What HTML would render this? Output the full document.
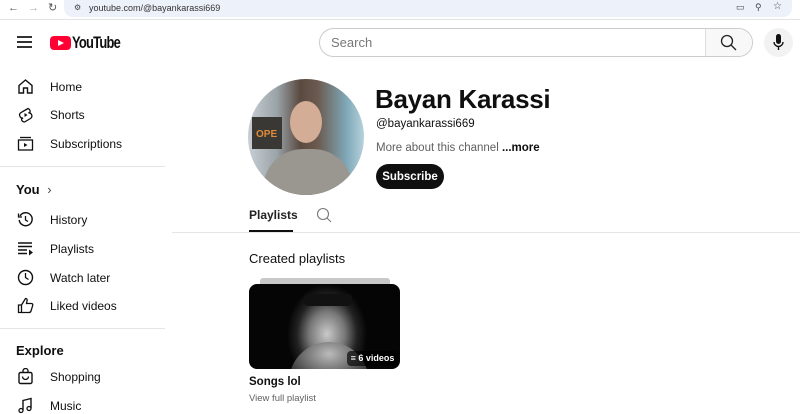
<!DOCTYPE html>
<html><head><style>
*{margin:0;padding:0;box-sizing:border-box}
body{width:800px;height:414px;overflow:hidden;background:#fff;font-family:"Liberation Sans",Arial,sans-serif;color:#0f0f0f;position:relative}
.a{position:absolute}
.nav{font-size:12px;left:50px}
.ic{left:17px;width:17px;height:17px}
</style></head><body>
<!-- browser bar -->
<div class="a" style="left:0;top:0;width:800px;height:20px;background:#fff;border-bottom:1px solid #e3e3e3"></div>
<div class="a" style="left:64px;top:0;width:728px;height:17px;background:#edf1fa;border-radius:0 0 9px 9px"></div>
<div class="a" style="left:8px;top:2px;font-size:11px;color:#555">←</div>
<div class="a" style="left:28px;top:2px;font-size:11px;color:#aaa">→</div>
<div class="a" style="left:48px;top:1px;font-size:11px;color:#555">↻</div>
<div class="a" style="left:74px;top:3px;font-size:8px;color:#444">⚙</div>
<div class="a" style="left:89px;top:3px;font-size:9px;color:#333">youtube.com/@bayankarassi669</div>
<div class="a" style="left:736px;top:2px;font-size:9px;color:#444">▭</div>
<div class="a" style="left:755px;top:2px;font-size:9px;color:#444">⚲</div>
<div class="a" style="left:773px;top:1px;font-size:10px;color:#444">☆</div>
<!-- header -->
<div class="a" style="left:17px;top:36px;width:15px;height:2px;background:#333;box-shadow:0 5px 0 #333,0 10px 0 #333"></div>
<div class="a" style="left:50px;top:36px;width:21px;height:14px;background:#ff0033;border-radius:4px"></div>
<div class="a" style="left:58px;top:40px;width:0;height:0;border-left:6px solid #fff;border-top:3.5px solid transparent;border-bottom:3.5px solid transparent"></div>
<div class="a" style="left:72px;top:33px;font-size:17px;font-weight:bold;letter-spacing:-1px;transform:scaleX(.76);transform-origin:left">YouTube</div>
<div class="a" style="left:319px;top:28px;width:434px;height:29px;border:1px solid #ccc;border-radius:15px;overflow:hidden">
<div class="a" style="left:385px;top:0;width:48px;height:27px;background:#f8f8f8;border-left:1px solid #ddd"></div>
</div>
<div class="a" style="left:331px;top:35px;font-size:13px;color:#777">Search</div>
<svg class="a" style="left:720px;top:34px" width="17" height="17" viewBox="0 0 17 17"><circle cx="7" cy="7" r="5.5" fill="none" stroke="#222" stroke-width="1.3"/><path d="M11 11l5 5" stroke="#222" stroke-width="1.3"/></svg>
<div class="a" style="left:764px;top:28px;width:29px;height:29px;border-radius:50%;background:#f2f2f2"></div>
<svg class="a" style="left:772px;top:34px" width="13" height="17" viewBox="0 0 13 17"><rect x="4" y="0" width="5" height="10" rx="2.5" fill="#111"/><path d="M2 8a4.5 4.5 0 0 0 9 0M6.5 12.5V16" stroke="#111" stroke-width="1.4" fill="none"/></svg>
<!-- sidebar -->
<svg class="a ic" style="top:78px" viewBox="0 0 17 17"><path d="M2 7.5L8.5 2 15 7.5V15h-4.5v-5h-4v5H2z" fill="none" stroke="#111" stroke-width="1.4"/></svg>
<div class="a nav" style="top:80px">Home</div>
<svg class="a ic" style="top:106px" viewBox="0 0 17 17"><path d="M11 2.5L4 6.5a3 3 0 0 0 2 5.5l-1.5 1a3 3 0 0 0 3 3l6-3.5a3 3 0 0 0-2-5.5l1.5-1a3 3 0 0 0-2-3.5z" fill="none" stroke="#111" stroke-width="1.3"/><path d="M7.5 7v4l3-2z" fill="#111"/></svg>
<div class="a nav" style="top:108px">Shorts</div>
<svg class="a ic" style="top:135px" viewBox="0 0 17 17"><path d="M3 2.5h11" stroke="#111" stroke-width="1.3"/><rect x="1.5" y="5" width="14" height="10" fill="none" stroke="#111" stroke-width="1.3"/><path d="M7 8v4l3.5-2z" fill="#111"/></svg>
<div class="a nav" style="top:137px">Subscriptions</div>
<div class="a" style="left:0;top:166px;width:165px;height:1px;background:#e5e5e5"></div>
<div class="a" style="left:16px;top:182px;font-size:13px;font-weight:bold">You <span style="font-weight:normal;color:#444;margin-left:4px">›</span></div>
<svg class="a ic" style="top:211px" viewBox="0 0 17 17"><path d="M3 5a6.5 6.5 0 1 1-.8 4" fill="none" stroke="#111" stroke-width="1.4"/><path d="M1.5 2.5v3.5H5" fill="none" stroke="#111" stroke-width="1.3"/><path d="M8.5 5v4l2.5 1.5" fill="none" stroke="#111" stroke-width="1.3"/></svg>
<div class="a nav" style="top:213px">History</div>
<svg class="a ic" style="top:240px" viewBox="0 0 17 17"><path d="M1 3h14M1 6.5h14M1 10h9M1 13.5h9" stroke="#111" stroke-width="1.4"/><path d="M12 9.5v6l4-3z" fill="#111"/></svg>
<div class="a nav" style="top:242px">Playlists</div>
<svg class="a ic" style="top:269px" viewBox="0 0 17 17"><circle cx="8.5" cy="8.5" r="7" fill="none" stroke="#111" stroke-width="1.4"/><path d="M8.5 4v4.5l3 2" fill="none" stroke="#111" stroke-width="1.3"/></svg>
<div class="a nav" style="top:271px">Watch later</div>
<svg class="a ic" style="top:297px" viewBox="0 0 17 17"><path d="M1.5 8h3v7.5h-3zM4.5 8l4-6.5c1.5 0 2 1 1.5 2.5L9.5 6.5h5c1 0 1.5 1 1.2 2l-1.7 5.5c-.3 1-1 1.5-2 1.5H4.5" fill="none" stroke="#111" stroke-width="1.3"/></svg>
<div class="a nav" style="top:299px">Liked videos</div>
<div class="a" style="left:0;top:328px;width:165px;height:1px;background:#e5e5e5"></div>
<div class="a" style="left:16px;top:343px;font-size:13px;font-weight:bold">Explore</div>
<svg class="a ic" style="top:368px" viewBox="0 0 17 17"><rect x="2" y="4.5" width="13" height="11" rx="1.5" fill="none" stroke="#111" stroke-width="1.4"/><path d="M6 4.5V3a2.5 2.5 0 0 1 5 0v1.5M5.5 8.5a3 3 0 0 0 6 0" fill="none" stroke="#111" stroke-width="1.3"/></svg>
<div class="a nav" style="top:370px">Shopping</div>
<svg class="a ic" style="top:397px" viewBox="0 0 17 17"><path d="M6 13V3.5L14 1.5V11" fill="none" stroke="#111" stroke-width="1.4"/><circle cx="4" cy="13.5" r="2" fill="none" stroke="#111" stroke-width="1.3"/><circle cx="12" cy="11.5" r="2" fill="none" stroke="#111" stroke-width="1.3"/></svg>
<div class="a nav" style="top:399px">Music</div>
<!-- channel -->
<div class="a" style="left:248px;top:79px;width:116px;height:116px;border-radius:50%;overflow:hidden;background:linear-gradient(90deg,#c9cfd4 0%,#9aa3a8 25%,#5a4a40 45%,#6b5a50 60%,#7fa8b8 85%,#b6d2dc 100%)">
<div class="a" style="left:15px;top:70px;width:90px;height:50px;background:#9a9690;border-radius:40px 40px 0 0"></div>
<div class="a" style="left:42px;top:22px;width:32px;height:42px;background:#d4ad96;border-radius:50%"></div>
<div class="a" style="left:4px;top:38px;width:30px;height:32px;background:#3a3834"></div>
<div class="a" style="left:8px;top:50px;font-size:10px;color:#e08a3a;font-weight:bold">OPE</div>
</div>
<div class="a" style="left:375px;top:84px;font-size:26px;font-weight:bold;letter-spacing:-.3px">Bayan Karassi</div>
<div class="a" style="left:376px;top:118px;font-size:11.5px">@bayankarassi669</div>
<div class="a" style="left:376px;top:142px;font-size:11.5px;color:#606060">More about this channel <b style="color:#0f0f0f">...more</b></div>
<div class="a" style="left:376px;top:164px;width:68px;height:25px;border-radius:13px;background:#0f0f0f;color:#fff;font-size:11.5px;font-weight:bold;display:flex;align-items:center;justify-content:center">Subscribe</div>
<div class="a" style="left:249px;top:208px;font-size:12px;font-weight:bold;color:#222">Playlists</div>
<div class="a" style="left:249px;top:230px;width:44px;height:2px;background:#0f0f0f"></div>
<svg class="a" style="left:316px;top:207px" width="16" height="16" viewBox="0 0 16 16"><circle cx="7" cy="7" r="5.5" fill="none" stroke="#777" stroke-width="1.1"/><path d="M11 11l4 4" stroke="#777" stroke-width="1.1"/></svg>
<div class="a" style="left:172px;top:232px;width:628px;height:1px;background:#e5e5e5"></div>
<div class="a" style="left:249px;top:251px;font-size:13px">Created playlists</div>
<div class="a" style="left:260px;top:278px;width:130px;height:8px;background:#c8c8c8;border-radius:3px 3px 0 0"></div>
<div class="a" style="left:249px;top:284px;width:151px;height:85px;border-radius:8px;overflow:hidden;background:radial-gradient(ellipse 40px 50px at 78px 50px,#c9c9c9 0%,#777 45%,#222 75%,#050505 100%)">
<div class="a" style="left:40px;top:58px;width:80px;height:40px;background:radial-gradient(ellipse at 50% 30%,#bbb,#444 70%,#111);border-radius:40px 40px 0 0"></div>
<div class="a" style="left:55px;top:10px;width:48px;height:12px;background:#111;border-radius:4px"></div>
<div class="a" style="left:98px;top:67px;width:51px;height:15px;background:rgba(0,0,0,.65);border-radius:4px;color:#fff;font-size:9px;font-weight:bold;line-height:15px;text-align:center">≡ 6 videos</div>
</div>
<div class="a" style="left:249px;top:376px;font-size:11.5px;font-weight:bold">Songs lol</div>
<div class="a" style="left:249px;top:393px;font-size:9.5px;color:#606060">View full playlist</div>
</body></html>
